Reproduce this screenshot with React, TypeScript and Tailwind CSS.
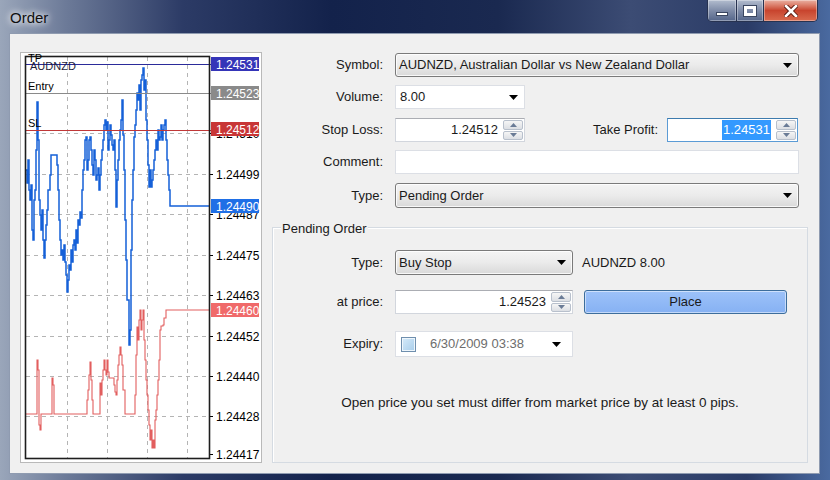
import React from "react";

type Pt = [number, number];

// chart data traced in page pixels
const BLUE: Pt[] = [
  [26, 170], [27, 183], [28, 160], [29, 190], [30, 200], [31, 185], [32, 230], [33, 240], [34, 200], [35, 190],
  [36, 150], [37, 102], [38, 140], [39, 200], [40, 215], [41, 230], [42, 210], [43, 240], [44, 258], [45, 240],
  [46, 225], [47, 210], [48, 190], [50, 175], [51, 155], [55, 155], [57, 165], [58, 190], [59, 220], [60, 240],
  [61, 255], [62, 250], [63, 260], [64, 245], [65, 262], [66, 275], [67, 292], [68, 280], [69, 265], [70, 270],
  [71, 250], [72, 262], [73, 245], [74, 240], [75, 250], [76, 230], [77, 243], [78, 220], [79, 225], [80, 212],
  [81, 218], [82, 190], [83, 170], [84, 160], [85, 140], [86, 137], [87, 170], [88, 160], [89, 140], [90, 137],
  [91, 150], [92, 165], [93, 175], [94, 150], [95, 160], [96, 180], [97, 175], [98, 168], [99, 190], [100, 175],
  [101, 160], [102, 150], [103, 140], [104, 125], [105, 120], [106, 130], [107, 122], [108, 150], [109, 140], [110, 125],
  [111, 135], [112, 145], [113, 150], [114, 140], [115, 170], [116, 207], [117, 180], [118, 160], [119, 140], [120, 130],
  [121, 120], [122, 100], [123, 135], [124, 170], [125, 220], [126, 260], [127, 300], [128, 300], [129, 345], [130, 330],
  [131, 250], [132, 200], [133, 170], [134, 137], [135, 125], [136, 110], [137, 93], [138, 100], [139, 85], [140, 110],
  [141, 80], [142, 75], [143, 68], [144, 90], [145, 80], [146, 120], [147, 140], [148, 165], [149, 187], [150, 170],
  [151, 187], [152, 180], [153, 170], [154, 160], [155, 150], [156, 140], [157, 150], [158, 130], [159, 140], [160, 137],
  [161, 125], [162, 140], [163, 130], [164, 125], [165, 120], [166, 140], [167, 160], [168, 175], [169, 190], [170, 206],
  [209, 206],
];

const RED: Pt[] = [
  [26, 414], [36, 414], [37, 360], [38, 370], [39, 425], [40, 430], [41, 414], [51, 414], [52, 378], [53, 385],
  [54, 414], [86, 414], [87, 400], [88, 390], [89, 375], [90, 362], [91, 380], [92, 400], [93, 414], [99, 414],
  [100, 383], [101, 395], [102, 380], [103, 370], [104, 360], [105, 370], [106, 375], [107, 360], [108, 372], [109, 378],
  [113, 378], [114, 385], [115, 392], [116, 395], [117, 380], [118, 365], [119, 355], [120, 347], [121, 355], [122, 365],
  [123, 390], [125, 414], [134, 414], [135, 395], [136, 355], [137, 327], [138, 340], [139, 320], [140, 310], [141, 330],
  [142, 320], [143, 310], [144, 340], [145, 360], [146, 380], [147, 395], [148, 410], [149, 425], [150, 440], [151, 430],
  [152, 448], [153, 440], [154, 448], [155, 420], [156, 410], [157, 395], [158, 380], [159, 360], [160, 330], [161, 326],
  [163, 325], [164, 318], [166, 310], [209, 310],
];

const AXIS: [string, number][] = [
  ["1.24522", 93], ["1.24510", 133], ["1.24499", 174], ["1.24487", 214], ["1.24475", 255],
  ["1.24463", 295], ["1.24452", 336], ["1.24440", 376], ["1.24428", 416], ["1.24417", 454],
];

const TAGS: { y: number; text: string; fill: string }[] = [
  { y: 64, text: "1.24531", fill: "#3535b8" },
  { y: 93, text: "1.24523", fill: "#8a8a8a" },
  { y: 129, text: "1.24512", fill: "#c83636" },
  { y: 206, text: "1.24490", fill: "#1f6fe6" },
  { y: 310, text: "1.24460", fill: "#f06a6a" },
];

function stepPath(pts: Pt[]) {
  let d = `M${pts[0][0]} ${pts[0][1]}`;
  for (let i = 1; i < pts.length; i++) d += ` H${pts[i][0]} V${pts[i][1]}`;
  return d;
}

function Chart() {
  return (
    <div className="h-[411px] w-[242px] shrink-0 border border-[#b9b9b9] bg-white">
      <svg width="240" height="409" viewBox="21 53 240 409" fontFamily="'Liberation Sans', Arial, sans-serif">
        {[67.5, 107.5, 147.5, 187.5].map((x) => (
          <line key={x} x1={x} y1={57} x2={x} y2={458} stroke="#b4b4b4" strokeDasharray="4 4" />
        ))}
        {AXIS.slice(0, 9).map(([, y]) => (
          <line key={y} x1={26} y1={y + 0.5} x2={209} y2={y + 0.5} stroke="#b4b4b4" strokeDasharray="4 4" />
        ))}
        {AXIS.map(([t, y]) => (
          <g key={t}>
            <line x1={209} y1={y + 0.5} x2={213} y2={y + 0.5} stroke="#000" />
            <text x={216} y={y + 5} fontSize="12" fill="#000">{t}</text>
          </g>
        ))}
        <path d={stepPath(RED)} fill="none" stroke="#e25e5e" strokeWidth="1.1" />
        <path d={stepPath(BLUE)} fill="none" stroke="#1560d8" strokeWidth="1.5" />
        <line x1={26} y1={64.5} x2={212} y2={64.5} stroke="#2b2b9a" />
        <line x1={26} y1={93.5} x2={212} y2={93.5} stroke="#8a8a8a" />
        <line x1={26} y1={130.5} x2={212} y2={130.5} stroke="#c03838" />
        <rect x={25.5} y={56.5} width={184} height={402} fill="none" stroke="#1e1e1e" strokeWidth="1.6" />
        <text x={28} y={62} fontSize="11" fill="#000">TP</text>
        <text x={30} y={70} fontSize="11" fill="#1e1e3a">AUDNZD</text>
        <text x={28} y={90} fontSize="11" fill="#000">Entry</text>
        <text x={28} y={127} fontSize="11" fill="#000">SL</text>
        {TAGS.map((t) => (
          <g key={t.text}>
            <rect x={211} y={t.y - 7} width={48} height={14} fill={t.fill} />
            <text x={216} y={t.y + 5} fontSize="12" fill="#fff">{t.text}</text>
          </g>
        ))}
      </svg>
    </div>
  );
}

function Arrow() {
  return (
    <svg width="9" height="5" viewBox="0 0 9 5" className="shrink-0">
      <polygon points="0,0 9,0 4.5,5" fill="#000" />
    </svg>
  );
}

function Combo({ text, className = "" }: { text: string; className?: string }) {
  return (
    <div
      className={`flex h-[24px] items-center justify-between rounded-[3px] border border-[#7a7a7a] bg-linear-to-b from-[#f4f4f4] via-[#ebebeb] to-[#d9d9d9] pl-[3px] pr-[6px] shadow-[inset_0_0_0_1px_rgba(255,255,255,0.8)] ${className}`}
    >
      <span>{text}</span>
      <Arrow />
    </div>
  );
}

function Spinner() {
  return (
    <div className="flex h-[20px] w-[20px] shrink-0 flex-col gap-[1px]">
      {[0, 1].map((i) => (
        <div
          key={i}
          className="flex flex-1 items-center justify-center rounded-[2px] border border-[#b8c0cc] bg-linear-to-b from-[#f6f6f6] to-[#dcdfe4]"
        >
          <svg width="7" height="4" viewBox="0 0 7 4">
            <polygon points={i === 0 ? "0,4 7,4 3.5,0" : "0,0 7,0 3.5,4"} fill="#6a7b96" />
          </svg>
        </div>
      ))}
    </div>
  );
}

function SpinInput({ value, className = "", focused = false }: { value: string; className?: string; focused?: boolean }) {
  return (
    <div
      className={`flex h-[24px] items-center border bg-white pr-[1px] ${
        focused ? "border-[#5b9bd5] border-t-[#3d7bad]" : "border-[#d2d6dd] border-t-[#abadb3]"
      } ${className}`}
    >
      <div className="flex flex-1 justify-end pr-[5px]">
        {focused ? <span className="bg-[#3399ff] px-[1px] text-white">{value}</span> : <span>{value}</span>}
      </div>
      <Spinner />
    </div>
  );
}

function Row({ label, children, className = "" }: { label: string; children: React.ReactNode; className?: string }) {
  return (
    <div className={`flex items-center ${className}`}>
      <span className="w-[111px] shrink-0 text-right">{label}</span>
      <div className="ml-[12px] flex flex-1 items-center">{children}</div>
    </div>
  );
}

export default function App() {
  return (
    <div className="flex h-[480px] w-[830px] flex-col overflow-hidden bg-[linear-gradient(90deg,#9aa6ba_0%,#6c7a98_8%,#2c3b66_22%,#13224b_40%,#1a2950_60%,#3c4c74_76%,#2a3b66_90%,#4a6aa0_100%)] font-['Liberation_Sans',Arial,sans-serif] text-[13px] text-[#1a1a1a]">
      <div className="flex h-[33px] shrink-0 items-start justify-between pl-[10px] pr-[12px]">
        <span className="pt-[7px] text-[15px] text-[#101010] [text-shadow:0_0_6px_#fff,0_0_10px_#fff]">Order</span>
        <div className="flex h-[22px] overflow-hidden rounded-b-[5px] border border-t-0 border-[#273250]">
          <div className="flex w-[29px] items-center justify-center border-r border-[#273250] bg-linear-to-b from-[#b3bdcf] via-[#7f8ca8] to-[#55668a] shadow-[inset_0_0_0_1px_rgba(255,255,255,0.35)]">
            <div className="mt-[7px] h-[4px] w-[12px] border border-[#3a4660] bg-white" />
          </div>
          <div className="flex w-[27px] items-center justify-center border-r border-[#273250] bg-linear-to-b from-[#b3bdcf] via-[#7f8ca8] to-[#55668a] shadow-[inset_0_0_0_1px_rgba(255,255,255,0.35)]">
            <div className="h-[10px] w-[12px] border-[3px] border-white outline outline-1 outline-[#3a4660]" />
          </div>
          <div className="flex w-[53px] items-center justify-center bg-linear-to-b from-[#e9b0a2] via-[#c8442e] to-[#d96a4e] shadow-[inset_0_0_0_1px_rgba(255,255,255,0.35)]">
            <svg width="14" height="12" viewBox="0 0 14 12">
              <path d="M2 1 L12 11 M12 1 L2 11" stroke="#5a1a10" strokeWidth="4.5" strokeLinecap="square" />
              <path d="M2 1 L12 11 M12 1 L2 11" stroke="#fff" strokeWidth="2.6" strokeLinecap="square" />
            </svg>
          </div>
        </div>
      </div>

      <div className="mx-[9px] mr-[10px] flex h-[441px] shrink-0 border border-[#8f9bb0] bg-[#f0f0f0] pl-[10px] pt-[18px]">
        <Chart />
        <div className="ml-[10px] flex w-[536px] flex-col">
          <Row label="Symbol:" className="mt-[1px] pr-[9px]">
            <Combo text="AUDNZD, Australian Dollar vs New Zealand Dollar" className="flex-1" />
          </Row>
          <Row label="Volume:" className="mt-[8px]">
            <div className="flex h-[24px] w-[130px] items-center justify-between border border-[#dcdfe5] bg-white pl-[4px] pr-[6px]">
              <span>8.00</span>
              <Arrow />
            </div>
          </Row>
          <Row label="Stop Loss:" className="mt-[9px] pr-[10px]">
            <SpinInput value="1.24512" className="w-[130px]" />
            <span className="ml-auto mr-[9px]">Take Profit:</span>
            <SpinInput value="1.24531" className="w-[131px]" focused />
          </Row>
          <Row label="Comment:" className="mt-[8px] pr-[9px]">
            <div className="h-[24px] flex-1 border border-[#dcdfe5] bg-white" />
          </Row>
          <Row label="Type:" className="mt-[9px] pr-[9px]">
            <Combo text="Pending Order" className="h-[25px] flex-1" />
          </Row>

          <div className="relative mt-[19px] flex h-[236px] flex-col border border-[#d5dbe2] shadow-[inset_1px_1px_0_#fff]">
            <span className="absolute -top-[9px] left-[8px] bg-[#f0f0f0] px-[1px]">Pending Order</span>
            <div className="mt-[22px] flex items-center">
              <span className="w-[110px] shrink-0 text-right">Type:</span>
              <Combo text="Buy Stop" className="ml-[12px] h-[25px] w-[178px]" />
              <span className="ml-[9px]">AUDNZD 8.00</span>
            </div>
            <div className="mt-[15px] flex items-center">
              <span className="w-[110px] shrink-0 text-right">at price:</span>
              <SpinInput value="1.24523" className="ml-[12px] w-[178px]" />
              <button className="ml-[11px] h-[24px] w-[203px] rounded-[3px] border border-[#3c6d9c] bg-linear-to-b from-[#9dc2f9] to-[#86b1f3] text-[#1a1a1a] shadow-[inset_0_0_0_1px_rgba(255,255,255,0.5)]">
                Place
              </button>
            </div>
            <div className="mt-[17px] flex items-center">
              <span className="w-[110px] shrink-0 text-right">Expiry:</span>
              <div className="ml-[12px] flex h-[26px] w-[178px] items-center border border-[#dcdfe5] bg-white pl-[5px] pr-[11px]">
                <div className="h-[15px] w-[15px] shrink-0 border border-[#6f8fae] bg-linear-to-br from-[#d6ebfa] to-[#a8cdea] shadow-[inset_0_0_0_1px_#eef6fc]" />
                <span className="ml-[14px] w-[97px] overflow-hidden whitespace-nowrap text-[#6d6d6d]">6/30/2009 03:38</span>
                <span className="ml-auto"><Arrow /></span>
              </div>
            </div>
            <p className="mt-[36px] text-center text-[13.5px]">Open price you set must differ from market price by at least 0 pips.</p>
          </div>
        </div>
      </div>
    </div>
  );
}
